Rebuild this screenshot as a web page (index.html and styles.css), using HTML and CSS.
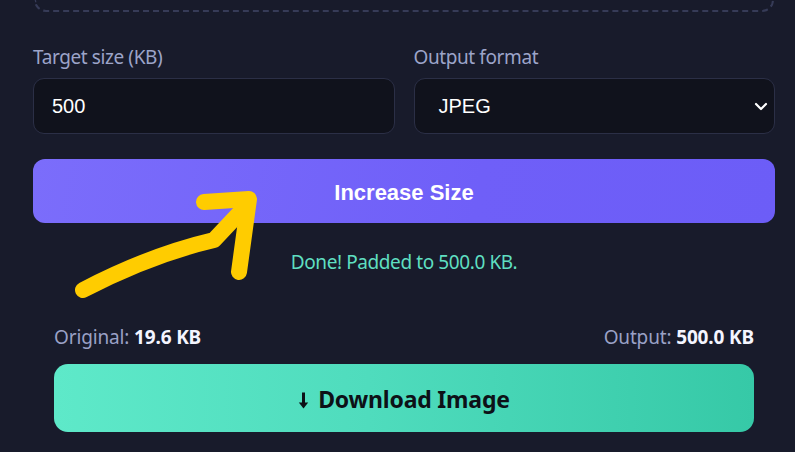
FILE: index.html
```html
<!DOCTYPE html>
<html>
<head>
<meta charset="utf-8">
<link rel="stylesheet" href="styles.css">
</head>
<body>
<div class="panel">
  <div class="dropzone"></div>
  <div class="fields">
    <div class="field">
      <label class="label">Target size (KB)</label>
      <div class="input">500</div>
    </div>
    <div class="field">
      <label class="label">Output format</label>
      <div class="input select">
        <span>JPEG</span>
        <svg class="chev" width="14" height="9" viewBox="0 0 14 9"><path d="M2 2 L7 7 L12 2" fill="none" stroke="#ffffff" stroke-width="2.2" stroke-linecap="round" stroke-linejoin="round"/></svg>
      </div>
    </div>
  </div>
  <button class="primary">Increase Size</button>
  <p class="status">Done! Padded to 500.0 KB.</p>
  <div class="result">
    <div class="stats">
      <span>Original: <b>19.6 KB</b></span>
      <span>Output: <b>500.0 KB</b></span>
    </div>
    <button class="download">
      <svg class="dl" width="11" height="17" viewBox="0 0 11 17"><path d="M5.5 0.5 V14" stroke="#0d1117" stroke-width="3" fill="none"/><path d="M0.8 10.5 L5.5 16.5 L10.2 10.5 Z" fill="#0d1117"/></svg>
      <span>Download Image</span>
    </button>
  </div>
</div>
<svg class="annot" width="795" height="452" viewBox="0 0 795 452">
  <path d="M83 290 Q 150 255 214 240 L 246 206" fill="none" stroke="#ffcc00" stroke-width="16" stroke-linecap="round" stroke-linejoin="round"/>
  <path d="M204 202 L 249 199 L 239 272" fill="none" stroke="#ffcc00" stroke-width="16" stroke-linecap="round" stroke-linejoin="round"/>
</svg>
</body>
</html>
```
FILE: styles.css
```css
* { box-sizing: border-box; }
html, body {
  margin: 0;
  padding: 0;
  background: #181b2b;
  overflow: hidden;
}
body {
  width: 795px;
  height: 452px;
  position: relative;
  font-family: "Noto Sans", "Open Sans", sans-serif;
}
.panel {
  margin-left: 33px;
  width: 742px;
  display: flex;
  flex-direction: column;
}
.dropzone {
  height: 12px;
  margin: 0 1px;
  border: 2px dashed #363b57;
  border-top: none;
  border-radius: 0 0 16px 16px;
}
.fields {
  display: grid;
  grid-template-columns: 1fr 1fr;
  column-gap: 19px;
  margin-top: 33px;
}
.field {
  display: flex;
  flex-direction: column;
}
.label {
  color: #9ca4c9;
  font-size: 19px;
  letter-spacing: -0.4px;
  line-height: 24px;
  margin-bottom: 9px;
}
.input {
  height: 56px;
  background: #10121c;
  border: 1px solid #2b2f46;
  border-radius: 11px;
  padding-left: 18px;
  display: flex;
  align-items: center;
  color: #ffffff;
  font-family: "Liberation Sans", Arial, sans-serif;
  font-size: 20px;
}
.select {
  padding-left: 24px;
  padding-right: 6px;
  justify-content: space-between;
}
.chev { margin-top: 1px; }
.primary {
  margin-top: 25px;
  height: 64px;
  border: none;
  border-radius: 12px;
  background: linear-gradient(100deg, #7b6dfb 0%, #6f5ff8 60%, #6c5df7 100%);
  color: #ffffff;
  font-family: "Liberation Sans", Arial, sans-serif;
  font-weight: bold;
  font-size: 22px;
  padding: 3px 0 0 0;
}
.status {
  margin: 27px 0 0 0;
  text-align: center;
  color: #5fdfc1;
  font-size: 19px;
  letter-spacing: -0.4px;
  line-height: 24px;
}
.result {
  padding: 0 21px;
  margin-top: 51px;
  display: flex;
  flex-direction: column;
}
.stats {
  display: flex;
  justify-content: space-between;
  color: #9aa1c6;
  font-size: 19px;
  letter-spacing: -0.15px;
  line-height: 24px;
}
.stats b {
  color: #f4f5ff;
  font-weight: 700;
}
.download {
  margin-top: 15px;
  height: 68px;
  border: none;
  border-radius: 14px;
  background: linear-gradient(90deg, #5ee9c9 0%, #4fdcbd 45%, #36c9a7 100%);
  color: #0d1117;
  font-family: "Noto Sans", "Open Sans", sans-serif;
  font-weight: 700;
  font-size: 23px;
  letter-spacing: -0.2px;
  display: flex;
  align-items: center;
  justify-content: center;
  gap: 9px;
  padding: 2px 0 0 0;
}
.dl { margin-top: 3px; }
.annot {
  position: absolute;
  left: 0;
  top: 0;
  pointer-events: none;
}
```
